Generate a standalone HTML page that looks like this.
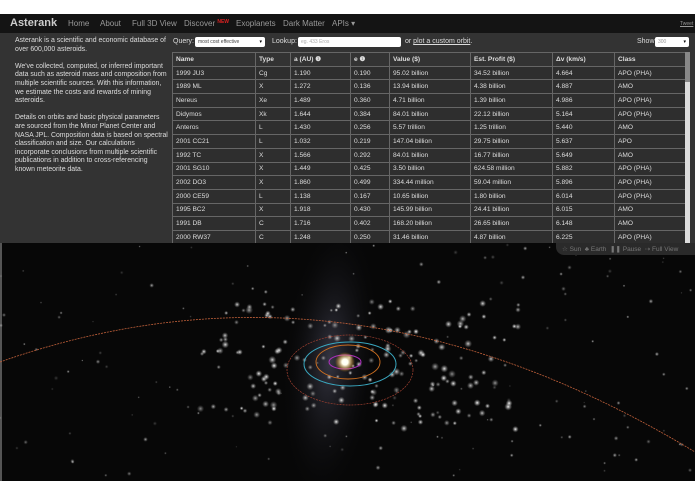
<!DOCTYPE html>
<html><head><meta charset="utf-8"><style>
*{margin:0;padding:0;box-sizing:border-box}
body{width:695px;height:494px;overflow:hidden;background:#fff;font-family:"Liberation Sans",sans-serif;position:relative}
#nav{position:absolute;left:0;top:14px;width:695px;height:19px;background:#141414;color:#999;font-size:8px}
#nav span{position:absolute;top:5px}
#panel{position:absolute;left:0;top:33px;width:695px;height:210px;background:#333}
#intro{position:absolute;left:15px;top:4px;width:158px;color:#ddd;font-size:6.9px;line-height:8.6px;white-space:nowrap}
#intro p{margin-bottom:8.6px}
.lbl{position:absolute;color:#ddd;font-size:7px}
.inp{position:absolute;background:#fff;border-radius:2px;font-size:5px;color:#444;padding:2px 3px}
table{position:absolute;left:172px;top:19px;border-collapse:collapse;width:513px;font-size:6.6px;color:#ddd;table-layout:fixed}
td{border:1px solid #666;height:13.7px;padding:0 3px;white-space:nowrap;background:#2e2e2e;overflow:hidden}
tr:first-child td{font-weight:bold;background:#333}
#scroll{position:absolute;left:685px;top:19px;width:5px;height:191px;background:#ddd}
#scroll div{width:5px;height:30px;background:#888}
#ctl{position:absolute;left:556px;top:243px;width:139px;height:12px;background:#2a2a2a;border-radius:0 0 0 8px;color:#777;font-size:6.5px;padding:2px 0 0 6px;white-space:nowrap}
svg{position:absolute;left:0;top:243px}
</style></head><body>
<div id="nav">
<span style="left:10px;top:3px;font-size:11px;font-weight:bold;color:#ccc">Asterank</span>
<span style="left:68px">Home</span><span style="left:100px">About</span><span style="left:132px">Full 3D View</span>
<span style="left:184px">Discover <b style="color:#d22;font-size:5px;vertical-align:top">NEW</b></span>
<span style="left:236px">Exoplanets</span><span style="left:283px">Dark Matter</span><span style="left:332px">APIs ▾</span>
<span style="left:680px;font-size:5px;top:7px;text-decoration:underline">Tweet</span>
</div>
<div id="panel">
<div id="intro"><p>Asterank is a scientific and economic database of<br>over 600,000 asteroids.</p>
<p>We've collected, computed, or inferred important<br>data such as asteroid mass and composition from<br>multiple scientific sources. With this information,<br>we estimate the costs and rewards of mining<br>asteroids.</p>
<p>Details on orbits and basic physical parameters<br>are sourced from the Minor Planet Center and<br>NASA JPL. Composition data is based on spectral<br>classification and size. Our calculations<br>incorporate conclusions from multiple scientific<br>publications in addition to cross-referencing<br>known meteorite data.</p></div>
<span class="lbl" style="left:173px;top:5px">Query:</span>
<div class="inp" style="left:195px;top:4px;width:70px;height:10px">most cost effective <span style="float:right;color:#000">▾</span></div>
<span class="lbl" style="left:272px;top:5px">Lookup:</span>
<div class="inp" style="left:298px;top:4px;width:103px;height:10px;color:#aaa">eg. 433 Eros</div>
<span class="lbl" style="left:405px;top:5px">or <u>plot a custom orbit</u>.</span>
<span class="lbl" style="left:637px;top:5px">Show</span>
<div class="inp" style="left:655px;top:4px;width:34px;height:10px;color:#999">300 <span style="float:right;color:#000">▾</span></div>
<table>
<colgroup><col style="width:83px"><col style="width:35px"><col style="width:60px"><col style="width:39px"><col style="width:81px"><col style="width:82px"><col style="width:62px"><col style="width:71px"></colgroup>
<tr><td>Name</td><td>Type</td><td>a (AU) ❶</td><td>e ❶</td><td>Value ($)</td><td>Est. Profit ($)</td><td>Δv (km/s)</td><td>Class</td></tr>
<tr><td>1999 JU3</td><td>Cg</td><td>1.190</td><td>0.190</td><td>95.02 billion</td><td>34.52 billion</td><td>4.664</td><td>APO (PHA)</td></tr>
<tr><td>1989 ML</td><td>X</td><td>1.272</td><td>0.136</td><td>13.94 billion</td><td>4.38 billion</td><td>4.887</td><td>AMO</td></tr>
<tr><td>Nereus</td><td>Xe</td><td>1.489</td><td>0.360</td><td>4.71 billion</td><td>1.39 billion</td><td>4.986</td><td>APO (PHA)</td></tr>
<tr><td>Didymos</td><td>Xk</td><td>1.644</td><td>0.384</td><td>84.01 billion</td><td>22.12 billion</td><td>5.164</td><td>APO (PHA)</td></tr>
<tr><td>Anteros</td><td>L</td><td>1.430</td><td>0.256</td><td>5.57 trillion</td><td>1.25 trillion</td><td>5.440</td><td>AMO</td></tr>
<tr><td>2001 CC21</td><td>L</td><td>1.032</td><td>0.219</td><td>147.04 billion</td><td>29.75 billion</td><td>5.637</td><td>APO</td></tr>
<tr><td>1992 TC</td><td>X</td><td>1.566</td><td>0.292</td><td>84.01 billion</td><td>16.77 billion</td><td>5.649</td><td>AMO</td></tr>
<tr><td>2001 SG10</td><td>X</td><td>1.449</td><td>0.425</td><td>3.50 billion</td><td>624.58 million</td><td>5.882</td><td>APO (PHA)</td></tr>
<tr><td>2002 DO3</td><td>X</td><td>1.860</td><td>0.499</td><td>334.44 million</td><td>59.04 million</td><td>5.896</td><td>APO (PHA)</td></tr>
<tr><td>2000 CE59</td><td>L</td><td>1.138</td><td>0.167</td><td>10.65 billion</td><td>1.80 billion</td><td>6.014</td><td>APO (PHA)</td></tr>
<tr><td>1995 BC2</td><td>X</td><td>1.918</td><td>0.430</td><td>145.99 billion</td><td>24.41 billion</td><td>6.015</td><td>AMO</td></tr>
<tr><td>1991 DB</td><td>C</td><td>1.716</td><td>0.402</td><td>168.20 billion</td><td>26.65 billion</td><td>6.148</td><td>AMO</td></tr>
<tr><td>2000 RW37</td><td>C</td><td>1.248</td><td>0.250</td><td>31.46 billion</td><td>4.87 billion</td><td>6.225</td><td>APO (PHA)</td></tr>
</table>
<div id="scroll"><div></div></div>
</div>
<svg width="695" height="238" viewBox="0 243 695 238">
<defs>
<radialGradient id="mw" cx="50%" cy="50%" r="50%"><stop offset="0" stop-color="#55556a" stop-opacity=".6"/><stop offset="1" stop-color="#000" stop-opacity="0"/></radialGradient>
<radialGradient id="sun"><stop offset="0" stop-color="#fff"/><stop offset=".3" stop-color="#ffe"/><stop offset="1" stop-color="#f90" stop-opacity="0"/></radialGradient>
<radialGradient id="st"><stop offset="0" stop-color="#fff"/><stop offset=".25" stop-color="#ddd" stop-opacity=".8"/><stop offset="1" stop-color="#888" stop-opacity="0"/></radialGradient>
</defs>
<rect x="0" y="243" width="695" height="238" fill="#070707"/>
<rect x="0" y="243" width="2" height="238" fill="#555"/>
<ellipse cx="330" cy="360" rx="50" ry="150" fill="url(#mw)" transform="rotate(5 330 360)"/>
<g id="stars"></g>
<path d="M0 362 Q345 240 695 452" fill="none" stroke="#c0603a" stroke-width="0.8" stroke-dasharray="2 1"/>
<ellipse cx="350" cy="370" rx="63" ry="35" fill="none" stroke="#a04030" stroke-width="0.7" stroke-dasharray="2 1"/>
<ellipse cx="350" cy="364" rx="46" ry="22" fill="none" stroke="#3aa8c0" stroke-width="1"/>
<ellipse cx="348" cy="362" rx="32" ry="17" fill="none" stroke="#d07020" stroke-width="0.9"/>
<ellipse cx="345" cy="362" rx="16" ry="7" fill="none" stroke="#b030c0" stroke-width="1"/>
<circle cx="345" cy="362" r="10" fill="url(#sun)"/>
</svg>
<div id="ctl">☆ Sun &nbsp;♣ Earth &nbsp;❚❚ Pause &nbsp;⇢ Full View</div>
<script>
var g=document.getElementById('stars'),s=7,h='';
function r(){s=(s*16807)%2147483647;return s/2147483647;}
for(var i=0;i<320;i++){var x,y,o,rad;
if(r()<0.6){x=200+r()*320;y=300+r()*130;rad=2+r()*2;o=0.5+r()*0.5;}else{x=r()*695;y=245+r()*236;rad=1+r()*1.5;o=0.2+r()*0.5;}
h+='<circle cx="'+x.toFixed(1)+'" cy="'+y.toFixed(1)+'" r="'+rad.toFixed(1)+'" fill="url(#st)" opacity="'+o.toFixed(2)+'"/>';}
g.innerHTML=h;
</script>
</body></html>
